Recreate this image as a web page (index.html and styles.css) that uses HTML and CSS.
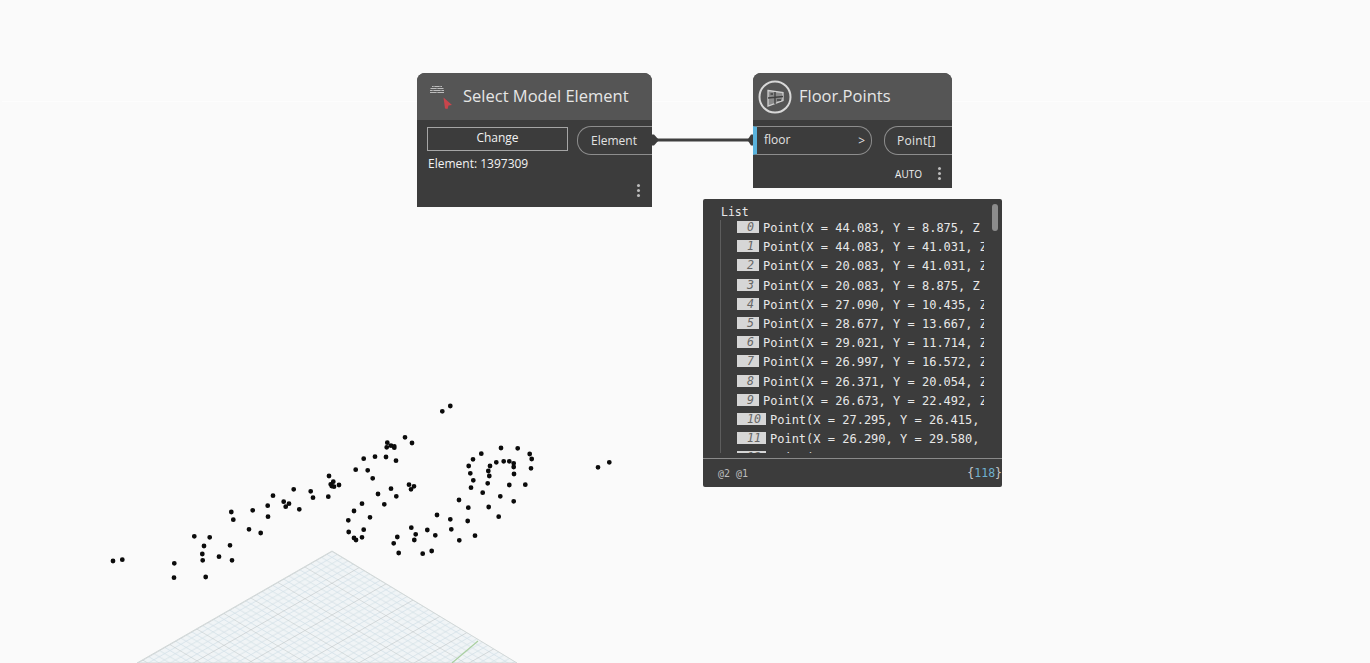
FILE: index.html
```html
<!DOCTYPE html>
<html lang="en">
<head>
  <meta charset="UTF-8" />
  <title>Floor.Points</title>
  <link rel="stylesheet" href="styles.css">
</head>
<body>
  <div class="canvas">
    <div class="horizon"></div>

    <!-- background preview: grid, points and the wire between nodes -->
    <svg class="scene" width="1370" height="663" viewBox="0 0 1370 663">
      <defs>
        <pattern id="floorGrid" patternUnits="userSpaceOnUse" width="27" height="27" patternTransform="matrix(1 0.6 -1 0.575 332 551)">
          <rect width="27" height="27" fill="#f0f4f6" />
          <path class="grid-minor" d="M5.4 0V27M10.8 0V27M16.2 0V27M21.6 0V27M0 5.4H27M0 10.8H27M0 16.2H27M0 21.6H27" />
          <path class="grid-major" d="M0 0V27M0 0H27" />
        </pattern>
      </defs>
      <polygon class="grid-fill" points="332,551 517,663 137,663" />
      <path class="grid-axis" d="M478 641L452 663" />
      <path class="points" d="M113 561h0M122.3 559.7h0M174.3 563.3h0M174 577.7h0M194.3 536.3h0M209.7 537.3h0M204 546h0M202.3 554h0M202.7 560.3h0M205.7 577h0M219 556.7h0M232 560.3h0M230 545.3h0M231.3 512h0M233.3 519.7h0M249 529.3h0M260.7 533h0M252.7 510.3h0M268 516.7h0M267.7 505.7h0M273 495.7h0M283.7 501.7h0M289 503.7h0M285.7 506.7h0M299.3 509.3h0M293.7 489.3h0M310.7 491.3h0M313 497.7h0M328.3 496.7h0M329 476h0M333.3 481.7h0M330.7 484.3h0M331.7 486h0M334 486.7h0M339 485h0M355.7 469.7h0M363.7 458.7h0M367.7 470.3h0M362 503.7h0M354 511h0M348.3 520.3h0M348.7 532h0M363.7 529.7h0M362 537.3h0M354 538h0M356 540h0M370 517.3h0M442.3 411.3h0M450.3 406h0M405 437.3h0M412 443h0M387.3 442.7h0M386.7 447.3h0M391 445.7h0M394.3 446.3h0M394.3 447.7h0M375 456.7h0M386 457h0M396 460.7h0M372.7 478.3h0M409 484.7h0M414 486.3h0M411 489.3h0M391 488.7h0M378 494h0M396.3 496.3h0M384.3 504.3h0M397.3 537h0M393.7 543.3h0M398.7 553h0M411.3 527.7h0M415.7 534.3h0M414.3 540h0M427.3 530h0M435.3 535.3h0M437 515h0M422.7 553.7h0M431.7 551h0M450.3 519.3h0M451.3 529.3h0M459.3 540.3h0M467.7 521h0M475 535.7h0M459 500h0M468.3 507.7h0M488.7 507h0M498.7 516.7h0M482.7 492.7h0M471 487.7h0M473.3 480.3h0M470.3 473.3h0M468.7 466h0M473 459.3h0M481.3 453.7h0M501 448h0M517.7 448.3h0M529.7 454h0M531.7 459h0M531 468.3h0M514 474h0M513.7 467h0M513.7 463.3h0M509.3 461.3h0M503.7 461.3h0M496.3 462.3h0M490 466h0M488.3 471h0M489.3 476h0M487.7 483.3h0M509.3 485h0M525.3 484.7h0M500.3 496.3h0M513.7 501.3h0M598 467.3h0M609.3 462.3h0" />
      <path class="wire" d="M656 140H750" />
      <path class="nub" d="M652 134.500L654 134.500L659 140L654 145.500L652 145.500Z" />
      <path class="nub" d="M753 134.500L751 134.500L747.500 140L751 145.500L753 145.500Z" />
    </svg>

    <div class="node node-select">
      <div class="node-head">
        <svg class="icon-brick" width="28" height="30" viewBox="0 0 28 30">
          <path d="M4 4.500H14M2.500 6.500H15.500M2 8.500H16M2 10.500H16" stroke="#bcbcbc" stroke-width="1.100" />
          <path d="M6 3.500V5M12 3.500V5M9 5.500V7M5 7.500V9M13 7.500V9M9 9.500V11" stroke="#666" stroke-width=".8" />
          <path d="M15.500 15.500L24 23L20.500 23.500L19.500 27L17 26.500Z" fill="#c8454c" />
        </svg>
        <span class="node-title">Select Model Element</span>
      </div>
      <div class="node-body">
        <div class="select-left">
          <div class="change-btn">Change</div>
          <div class="element-id">Element: 1397309</div>
        </div>
        <div class="port port-out port-element">Element</div>
      </div>
      <div class="node-foot">
        <div class="menu-dots"><i></i><i></i><i></i></div>
      </div>
    </div>

    <div class="node node-floor">
      <div class="node-head">
        <svg class="icon-floor" width="34" height="34" viewBox="0 0 34 34">
          <circle cx="17" cy="17" r="15.500" fill="none" stroke="#d8d8d8" stroke-width="2" />
          <path d="M10 10.500L25 12.500V20.500L10 26Z" fill="#8a8a8a" stroke="#cfcfcf" stroke-width="1.300" />
          <path d="M17 12V24M10 18L25 16.500M12.500 14H15M19 20H23" stroke="#3f3f3f" stroke-width="1.400" fill="none" />
        </svg>
        <span class="node-title">Floor.Points</span>
      </div>
      <div class="node-body floor-body">
        <div class="port-in">
          <span>floor</span>
          <span class="chevron">&gt;</span>
        </div>
        <div class="port port-out port-point">Point[]</div>
      </div>
      <div class="node-foot floor-foot">
        <span class="lacing">AUTO</span>
        <div class="menu-dots"><i></i><i></i><i></i></div>
      </div>
    </div>

    <div class="watch">
      <div class="watch-list">
        <div class="list-title">List</div>
        <div class="rows">
          <div class="row"><b>0</b><span>Point(X = 44.083, Y = 8.875, Z</span></div>
          <div class="row"><b>1</b><span>Point(X = 44.083, Y = 41.031, Z</span></div>
          <div class="row"><b>2</b><span>Point(X = 20.083, Y = 41.031, Z</span></div>
          <div class="row"><b>3</b><span>Point(X = 20.083, Y = 8.875, Z</span></div>
          <div class="row"><b>4</b><span>Point(X = 27.090, Y = 10.435, Z</span></div>
          <div class="row"><b>5</b><span>Point(X = 28.677, Y = 13.667, Z</span></div>
          <div class="row"><b>6</b><span>Point(X = 29.021, Y = 11.714, Z</span></div>
          <div class="row"><b>7</b><span>Point(X = 26.997, Y = 16.572, Z</span></div>
          <div class="row"><b>8</b><span>Point(X = 26.371, Y = 20.054, Z</span></div>
          <div class="row"><b>9</b><span>Point(X = 26.673, Y = 22.492, Z</span></div>
          <div class="row"><b>10</b><span>Point(X = 27.295, Y = 26.415,</span></div>
          <div class="row"><b>11</b><span>Point(X = 26.290, Y = 29.580,</span></div>
          <div class="row"><b>12</b><span>Point(X</span></div>
        </div>
        <div class="scroll-thumb"></div>
      </div>
      <div class="watch-foot">
        <span class="levels">@2 @1</span>
        <span class="count">{<em>118</em>}</span>
      </div>
    </div>
  </div>
</body>
</html>
```

FILE: styles.css
```css
* {
  margin: 0;
  padding: 0;
  box-sizing: border-box;
}
body {
  background: #fafafa;
  font-family: 'Open Sans', 'Noto Sans', sans-serif;
  color: #eee;
  overflow: hidden;
}
.canvas {
  position: relative;
  width: 1370px;
  height: 663px;
  overflow: hidden;
}
.horizon {
  position: absolute;
  top: 101px;
  left: 2px;
  right: 0;
  height: 1px;
  background: #fdfdfd;
}
.scene {
  position: absolute;
  top: 0;
  left: 0;
}
.grid-fill {
  fill: url(#floorGrid);
  stroke: #d2d8d8;
  stroke-width: 1;
}
.grid-minor {
  fill: none;
  stroke: #d3e1e7;
  stroke-width: 0.7;
}
.grid-major {
  fill: none;
  stroke: #bfc6c7;
  stroke-width: 1;
}
.grid-axis {
  fill: none;
  stroke: #a9cfa0;
  stroke-width: 1.2;
}
.points {
  fill: none;
  stroke: #0b0b0b;
  stroke-width: 4.8;
  stroke-linecap: round;
}
.wire {
  fill: none;
  stroke: #3f3f3f;
  stroke-width: 3;
}
.nub {
  fill: #3c3c3c;
}

/* nodes */
.node {
  position: absolute;
  top: 73px;
  display: flex;
  flex-direction: column;
  background: #3c3c3c;
  border-radius: 8px 8px 0 0;
  overflow: hidden;
}
.node-select {
  left: 417px;
  width: 235px;
  height: 134px;
}
.node-floor {
  left: 753px;
  width: 199px;
  height: 115px;
}
.node-head {
  display: flex;
  align-items: center;
  height: 47px;
  flex: none;
  background: #555;
}
.node-title {
  padding-bottom: 2px;
  font-size: 16.5px;
  color: #e6e6e6;
}
.icon-brick {
  margin: 0 7px 0 11px;
  flex: none;
  height: 30px;
}
.icon-floor {
  margin: 0 7px 0 5px;
  flex: none;
}
.node-body {
  display: flex;
  justify-content: space-between;
  padding-top: 6px;
  flex: none;
}
.select-left {
  width: 151px;
  padding-left: 10px;
  padding-top: 1px;
}
.change-btn {
  height: 24px;
  border: 1px solid #a5a5a5;
  font-size: 12px;
  line-height: 20px;
  text-align: center;
  color: #f2f2f2;
}
.element-id {
  margin-top: 3px;
  margin-left: 1px;
  font-size: 12px;
  line-height: 19px;
  color: #f2f2f2;
  white-space: nowrap;
}
.port {
  display: flex;
  align-items: center;
  height: 29px;
  font-size: 12px;
  color: #e2e2e2;
}
.port-out {
  border: 1px solid #8d8d8d;
  border-right: none;
  border-radius: 14px 0 0 14px;
}
.port-element {
  width: 75px;
  padding-left: 13px;
}
.port-point {
  width: 68px;
  padding-left: 12px;
  letter-spacing: 0.3px;
}
.floor-body {
  align-items: flex-start;
}
.port-in {
  display: flex;
  justify-content: space-between;
  align-items: center;
  width: 119px;
  height: 29px;
  padding: 0 6px 3px 7px;
  border: 1px solid #8d8d8d;
  border-left: 4px solid #59b2dc;
  border-radius: 0 14px 14px 0;
  font-size: 12px;
  color: #e2e2e2;
}
.chevron {
  padding-top: 3px;
  font-size: 12px;
}
.node-foot {
  display: flex;
  justify-content: flex-end;
  align-items: flex-end;
  flex: 1;
  padding: 0 12px 10px 0;
}
.floor-foot {
  align-items: center;
  padding: 4px 11px 0 0;
}
.lacing {
  margin-right: 16px;
  font-size: 10px;
  color: #f0f0f0;
}
.menu-dots {
  display: flex;
  flex-direction: column;
  gap: 2px;
}
.menu-dots i {
  display: block;
  width: 3px;
  height: 3px;
  border-radius: 50%;
  background: #bdbdbd;
}

/* watch panel */
.watch {
  position: absolute;
  left: 703px;
  top: 199px;
  width: 299px;
  height: 288px;
  display: flex;
  flex-direction: column;
  background: #3c3c3c;
  border-radius: 2px;
  font-family: 'DejaVu Sans Mono', 'Liberation Mono', monospace;
  font-size: 12px;
  color: #e8e8e8;
}
.watch-list {
  position: relative;
  height: 260px;
  flex: none;
  border-bottom: 1px solid #8a8a8a;
  overflow: hidden;
}
.list-title {
  padding: 6px 0 0 18px;
  font-size: 11.5px;
  line-height: 15px;
}
.rows {
  height: 233px;
  margin-left: 17px;
  margin-right: 18px;
  padding-left: 16px;
  border-left: 1px solid #5d5d5d;
  overflow: hidden;
}
.row {
  display: flex;
  height: 19.2px;
  white-space: nowrap;
  line-height: 16px;
}
.row b {
  flex: none;
  height: 12px;
  margin: 1px 4px 0 0;
  padding: 0 5px 0 10px;
  background: #d6d6d6;
  color: #666;
  font-size: 11.600px;
  font-style: italic;
  font-weight: normal;
  line-height: 13px;
  text-align: right;
  overflow: hidden;
}
.row span {
  flex: none;
}
.scroll-thumb {
  position: absolute;
  top: 5px;
  right: 4px;
  width: 6px;
  height: 27px;
  border-radius: 3px;
  background: #8c8c8c;
}
.watch-foot {
  display: flex;
  justify-content: space-between;
  align-items: center;
  flex: 1;
  padding: 0 0 0 15px;
  font-size: 10px;
  color: #bdbdbd;
}
.count {
  font-size: 11.500px;
  color: #c5c5c5;
}
.count em {
  font-style: normal;
  color: #6fb0cf;
}
```
